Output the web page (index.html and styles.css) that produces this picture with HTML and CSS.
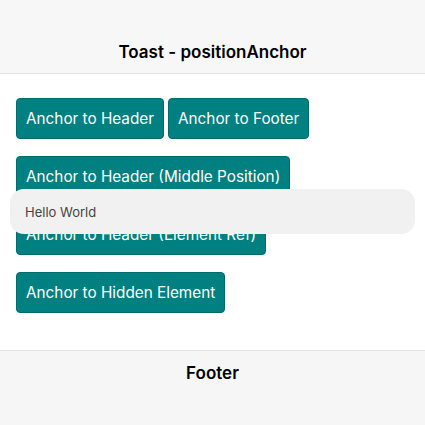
FILE: index.html
```html
<!DOCTYPE html>
<html>
<head>
<meta charset="utf-8">
<link rel="stylesheet" href="styles.css">
</head>
<body>
<div class="app">
  <header class="header">
    <div class="title">Toast - positionAnchor</div>
  </header>
  <main class="content">
    <div class="row">
      <button class="btn">Anchor to Header</button>
      <button class="btn">Anchor to Footer</button>
    </div>
    <div class="row">
      <button class="btn">Anchor to Header (Middle Position)</button>
    </div>
    <div class="row">
      <button class="btn">Anchor to Header (Element Ref)</button>
    </div>
    <div class="row">
      <button class="btn">Anchor to Hidden Element</button>
    </div>
    <div class="toast">Hello World</div>
  </main>
  <footer class="footer">
    <div class="title">Footer</div>
  </footer>
</div>
</body>
</html>
```

FILE: styles.css
```css
* { box-sizing: border-box; }
html, body { margin: 0; padding: 0; height: 100%; }
body {
  font-family: Inter, "Liberation Sans", sans-serif;
  background: #fff;
  color: #000;
}
.app {
  display: flex;
  flex-direction: column;
  height: 425px;
}
.header {
  background: #f7f7f7;
  border-bottom: 1px solid #e4e4e4;
  height: 74px;
  padding-top: 41px;
}
.title {
  text-align: center;
  font-size: 17px;
  font-weight: 600;
  line-height: 22px;
}
.content {
  position: relative;
  flex: 1;
  padding: 24px 16px 0;
  display: flex;
  flex-direction: column;
  gap: 17px;
}
.row {
  display: flex;
  gap: 4px;
}
.btn {
  font-family: inherit;
  font-size: 15.3px;
  color: #fff;
  background: #008080;
  border: 1px solid #006b6b;
  border-radius: 4px;
  height: 41px;
  padding: 0 9px;
  line-height: 1;
}
.toast {
  position: absolute;
  left: 10px;
  right: 10px;
  top: 115px;
  height: 45px;
  border-radius: 14px;
  background: #f1f1f1;
  color: #444;
  font-size: 13px;
  display: flex;
  align-items: center;
  padding-left: 15px;
}
.footer {
  background: #f6f6f6;
  border-top: 1px solid #e4e4e4;
  height: 75px;
  padding-top: 11px;
}
```
